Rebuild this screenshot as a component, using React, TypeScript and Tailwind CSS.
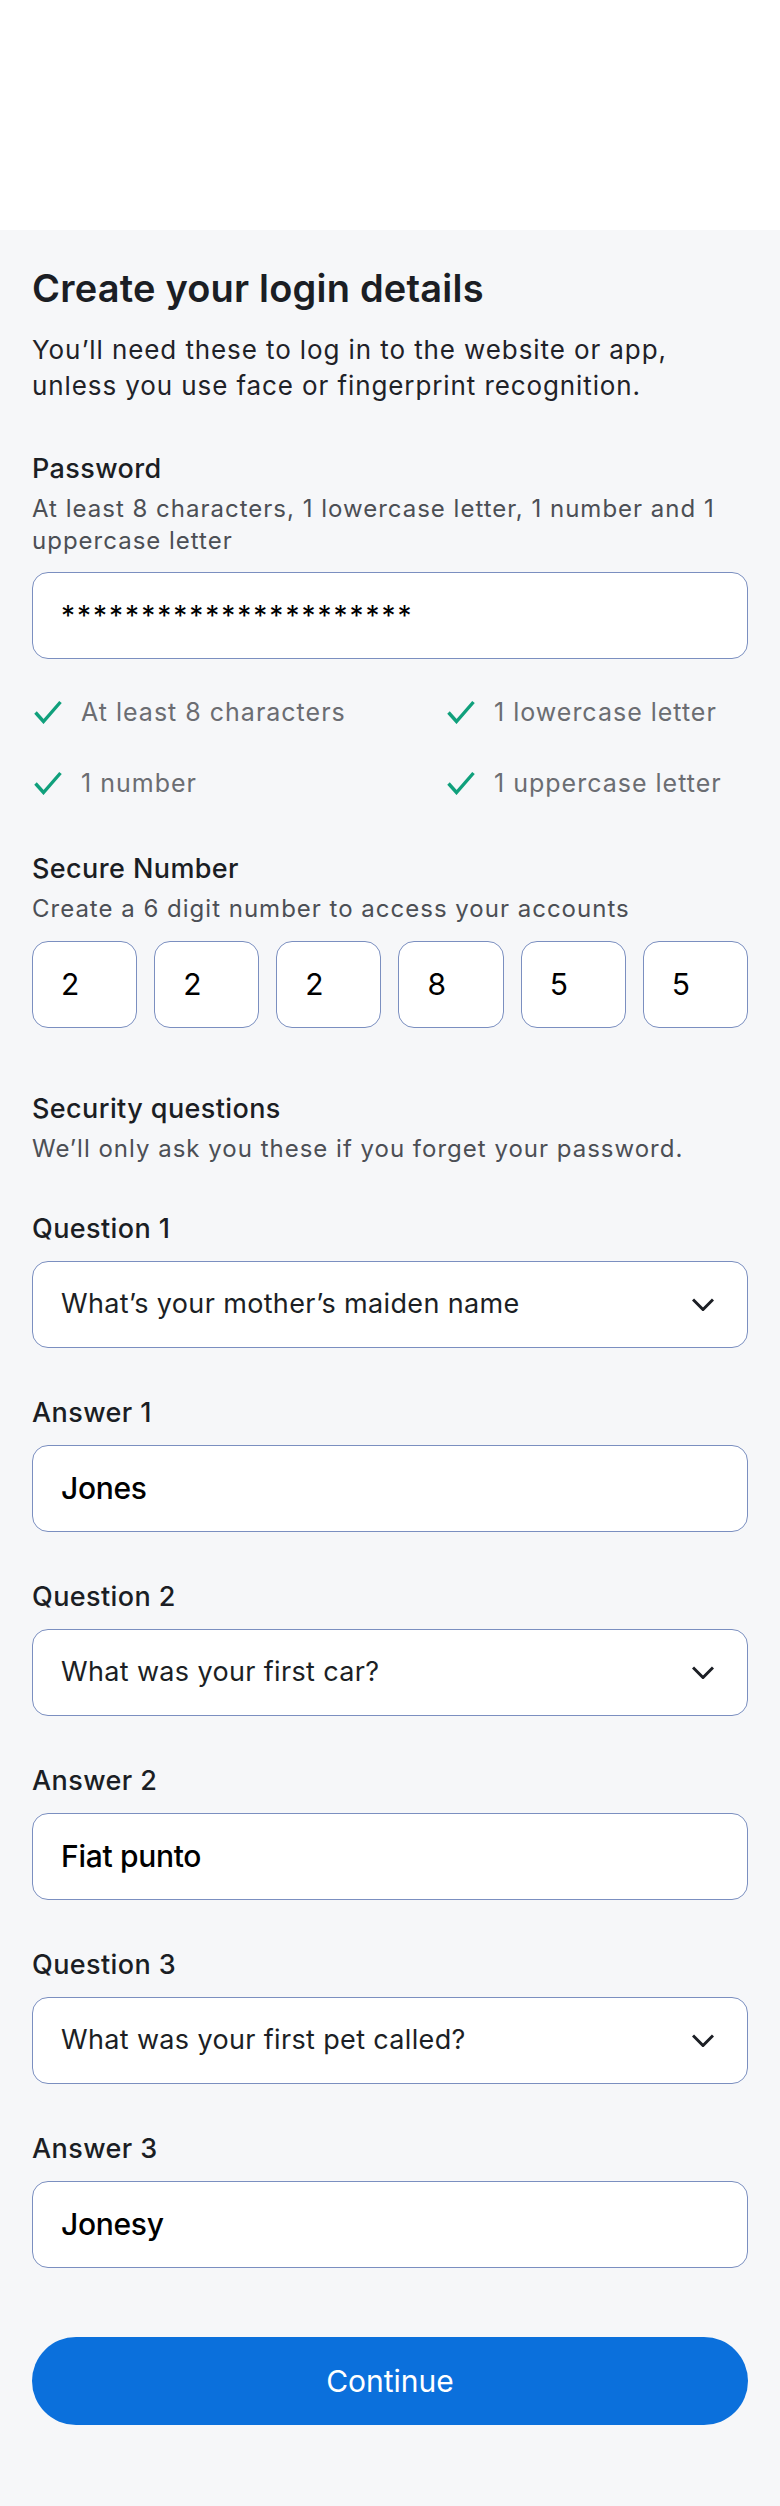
const font = { fontFamily: "Inter, 'Noto Sans', sans-serif" };

function Check() {
  return (
    <svg width="28" height="24" viewBox="0 0 28 24" fill="none" className="ml-[2px] shrink-0">
      <path d="M1.5 12.5 L9.5 21.5 L26.5 2" stroke="#10a07c" strokeWidth="3.4" />
    </svg>
  );
}

function Chevron() {
  return (
    <svg width="22" height="13" viewBox="0 0 22 13" fill="none">
      <path d="M1 1.5 L11 11.5 L21 1.5" stroke="#1c1f25" strokeWidth="3" />
    </svg>
  );
}

function Label({ children, className = "" }: { children: React.ReactNode; className?: string }) {
  return (
    <div className={`text-[27px] leading-[36px] font-medium tracking-[0.4px] text-[#1b1e24] ${className}`}>
      {children}
    </div>
  );
}

function Hint({ children, className = "" }: { children: React.ReactNode; className?: string }) {
  return (
    <div className={`mt-[6px] text-[24px] leading-[32px] tracking-[1px] text-[#4c4f55] ${className}`}>{children}</div>
  );
}

function Field({ children, className = "" }: { children: React.ReactNode; className?: string }) {
  return (
    <div
      className={`h-[87px] rounded-[16px] border border-[#7b8fc0] bg-white flex items-center pl-[28px] ${className}`}
    >
      {children}
    </div>
  );
}

const checks = ["At least 8 characters", "1 lowercase letter", "1 number", "1 uppercase letter"];
const pin = ["2", "2", "2", "8", "5", "5"];
const questions = [
  { q: "What’s your mother’s maiden name", a: "Jones" },
  { q: "What was your first car?", a: "Fiat punto" },
  { q: "What was your first pet called?", a: "Jonesy" },
];

export default function App() {
  return (
    <div style={font} className="w-[780px] h-[2506px] bg-white flex flex-col">
      <div className="h-[230px] bg-white shrink-0" />
      <div className="flex-1 bg-[#f6f7f9] px-[32px] pt-[35px]">
        <h1 className="text-[38px] leading-[46px] font-semibold text-[#1b1e24] tracking-[0.2px]">
          Create your login details
        </h1>
        <p className="mt-[21px] text-[26px] leading-[36px] tracking-[0.9px] text-[#1f2228]">
          You’ll need these to log in to the website or app,
          <br />
          unless you use face or fingerprint recognition.
        </p>

        <Label className="mt-[47px]">Password</Label>
        <Hint>At least 8 characters, 1 lowercase letter, 1 number and 1 uppercase letter</Hint>
        <Field className="mt-[15px]">
          <span className="text-[28px] text-black tracking-[2px]">**********************</span>
        </Field>

        <div className="mt-[35px] grid grid-cols-[413px_1fr] gap-y-[35px]">
          {checks.map((c) => (
            <div key={c} className="flex items-center gap-[19px]">
              <Check />
              <span className="text-[25px] leading-[36px] tracking-[1px] text-[#6b6d72]">{c}</span>
            </div>
          ))}
        </div>

        <Label className="mt-[50px]">Secure Number</Label>
        <Hint>Create a 6 digit number to access your accounts</Hint>
        <div className="mt-[16px] grid grid-cols-6 gap-[17px]">
          {pin.map((d, i) => (
            <Field key={i}>
              <span className="text-[30px] text-black">{d}</span>
            </Field>
          ))}
        </div>

        <Label className="mt-[63px]">Security questions</Label>
        <Hint className="tracking-[0.85px]">We’ll only ask you these if you forget your password.</Hint>

        {questions.map((item, i) => (
          <div key={i}>
            <Label className={i === 0 ? "mt-[46px]" : "mt-[47px]"}>Question {i + 1}</Label>
            <Field className="mt-[14px] justify-between pr-[33px]">
              <span className="text-[27px] tracking-[0.35px] text-[#1c1f25]">{item.q}</span>
              <Chevron />
            </Field>
            <Label className="mt-[47px]">Answer {i + 1}</Label>
            <Field className="mt-[14px]">
              <span className="text-[30px] font-medium tracking-[-0.3px] text-black">{item.a}</span>
            </Field>
          </div>
        ))}

        <button className="mt-[69px] w-full h-[88px] rounded-full bg-[#0b70dc] text-white text-[30px]">
          Continue
        </button>
      </div>
    </div>
  );
}
